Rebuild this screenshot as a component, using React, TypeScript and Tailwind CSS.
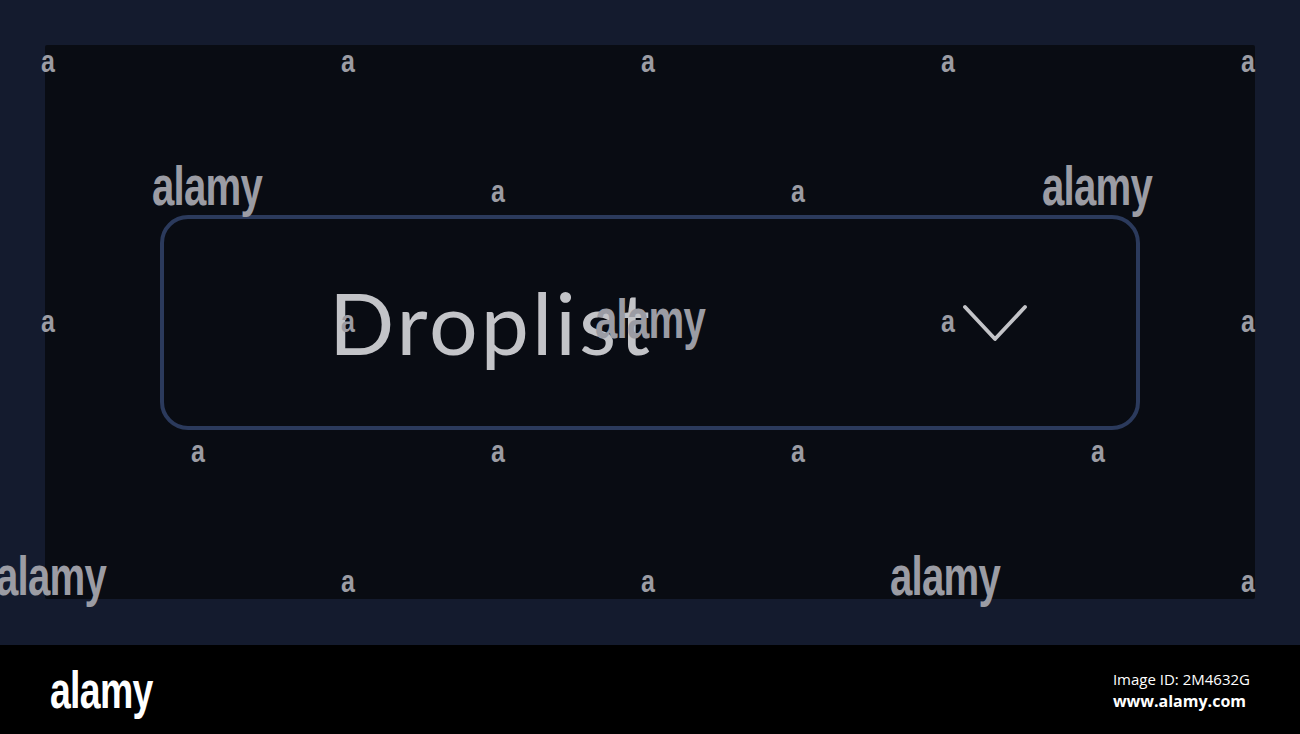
// little "a" marks tiled over the artwork
const MARKS: [number, number][] = [
  [41, 45], [341, 45], [641, 45], [941, 45], [1241, 45],
  [491, 175], [791, 175],
  [41, 305], [341, 305], [941, 305], [1241, 305],
  [191, 435], [491, 435], [791, 435], [1091, 435],
  [341, 565], [641, 565], [1241, 565],
];

const WORDS: [number, number][] = [
  [152, 159],
  [1042, 159],
  [-4, 549],
  [890, 549],
  [595, 292],
];

function Mark({ x, y }: { x: number; y: number }) {
  return (
    <span
      className="absolute origin-left scale-x-[0.78] text-[32px] leading-none font-bold text-[#9b9ca4] [font-family:'Liberation_Sans',sans-serif]"
      style={{ left: x, top: y }}
    >
      a
    </span>
  );
}

function Word({ x, y }: { x: number; y: number }) {
  return (
    <span
      className="absolute origin-left scale-x-[0.73] text-[55px] leading-none font-bold tracking-[-1px] text-[#9b9ca4] [font-family:'Liberation_Sans',sans-serif]"
      style={{ left: x, top: y }}
    >
      alamy
    </span>
  );
}

function Chevron() {
  return (
    <svg width="66" height="40" viewBox="0 0 66 40" fill="none" className="mt-[4px]">
      <polyline
        points="3,3 33,35 63,3"
        stroke="#c3c4c8"
        strokeWidth="3.8"
        strokeLinecap="round"
        strokeLinejoin="round"
      />
    </svg>
  );
}

function Droplist() {
  return (
    <div className="flex h-[215px] w-[980px] items-center rounded-[28px] border-[4px] border-[#2b3a5c] pl-[165px] pr-[108px]">
      <span className="text-[86px] leading-none tracking-[3px] text-[#c3c4c8] [font-family:Lato,sans-serif]">
        Droplist
      </span>
      <div className="flex-1" />
      <Chevron />
    </div>
  );
}

export default function App() {
  return (
    <div className="relative flex h-[734px] w-[1300px] flex-col overflow-hidden bg-black">
      <div className="h-[645px] bg-[#141b2e] p-[45px] pb-[46px]">
        <div className="flex h-full items-center justify-center rounded-[2px] bg-[#090c13]">
          <Droplist />
        </div>
      </div>
      <div className="flex flex-1 items-center justify-between pl-[50px] pr-[50px]">
        <span className="origin-left scale-x-[0.72] text-[52px] leading-none font-bold tracking-[-1px] text-white [font-family:'Liberation_Sans',sans-serif]">
          alamy
        </span>
        <div className="flex flex-col items-start gap-[4px] text-white [font-family:'Open_Sans',sans-serif]">
          <span className="text-[15px] leading-[18px]">Image ID: 2M4632G</span>
          <span className="text-[16px] leading-[18px] font-bold">www.alamy.com</span>
        </div>
      </div>
      {MARKS.map(([x, y]) => (
        <Mark key={`${x}-${y}`} x={x} y={y} />
      ))}
      {WORDS.map(([x, y]) => (
        <Word key={`${x}-${y}`} x={x} y={y} />
      ))}
    </div>
  );
}
